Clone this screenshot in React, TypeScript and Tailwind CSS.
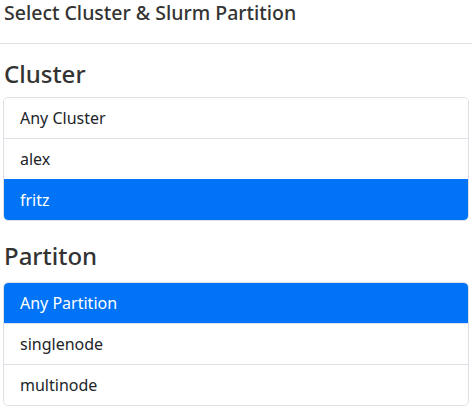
import React from "react";

const font = { fontFamily: '"Noto Sans", "Open Sans", sans-serif' };

function Item({ label, active, first, last }: { label: string; active?: boolean; first?: boolean; last?: boolean }) {
  let cls = "flex items-center pl-[16px] text-[16px] ";
  cls += active ? "bg-[#0073f6] text-white " : "bg-white text-[#212529] ";
  if (first) {
    cls += "h-[40px] rounded-t-[4px] ";
  } else {
    cls += active ? "h-[41px] border-t border-[#0073f6] " : "h-[41px] border-t border-[#dee2e6] ";
  }
  if (last) cls += "rounded-b-[4px] ";
  return <div className={cls}>{label}</div>;
}

function Group({ items, activeIndex }: { items: string[]; activeIndex: number }) {
  return (
    <div className="mx-[3px] border border-[#dee2e6] rounded-[5px] overflow-hidden">
      {items.map((it, i) => (
        <Item key={it} label={it} active={i === activeIndex} first={i === 0} last={i === items.length - 1} />
      ))}
    </div>
  );
}

export default function App() {
  return (
    <div className="w-[472px] h-[409px] bg-white" style={font}>
      <div className="h-[44px] border-b border-[#dee2e6] flex items-start pl-[4px]">
        <span className="text-[19.5px] text-[#333] leading-[26px] font-medium">Select Cluster &amp; Slurm Partition</span>
      </div>
      <h3 className="text-[24px] text-[#333] leading-[30px] pl-[4px] mt-[15px] mb-[8px] font-medium">Cluster</h3>
      <Group items={["Any Cluster", "alex", "fritz"]} activeIndex={2} />
      <h3 className="text-[24px] text-[#333] leading-[30px] pl-[4px] mt-[20px] mb-[11px] font-medium">Partiton</h3>
      <Group items={["Any Partition", "singlenode", "multinode"]} activeIndex={0} />
    </div>
  );
}
